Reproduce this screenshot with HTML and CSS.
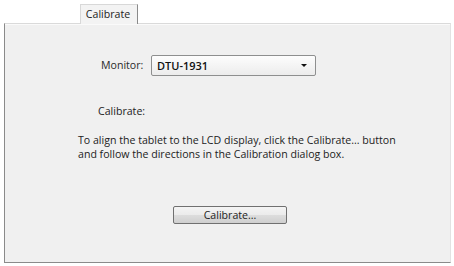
FILE: index.html
```html
<!DOCTYPE html>
<html>
<head>
<meta charset="utf-8">
<link rel="stylesheet" href="styles.css">
</head>
<body>
<div class="window">
  <div class="tabs">
    <div class="tab">Calibrate</div>
  </div>
  <div class="panel">
    <div class="monitor-row">
      <span class="label">Monitor:</span>
      <div class="select">
        <span class="select-text">DTU-1931</span>
        <svg class="arrow" width="6" height="3" viewBox="0 0 6 3"><path d="M0 0H6L3 3Z" fill="#111"/></svg>
      </div>
    </div>
    <div class="cal-label">Calibrate:</div>
    <p class="desc">To align the tablet to the LCD display, click the Calibrate... button<br>and follow the directions in the Calibration dialog box.</p>
    <div class="btn-row">
      <div class="button">Calibrate...</div>
    </div>
  </div>
</div>
</body>
</html>
```
FILE: styles.css
```css
html, body {
  margin: 0;
  padding: 0;
  background: #ffffff;
}
body {
  font-family: "Open Sans", "Noto Sans", sans-serif;
  font-size: 10.6px;
  color: #222222;
}
.window {
  width: 454px;
  height: 266px;
  padding: 4px 3px 0 4px;
  box-sizing: border-box;
  display: flex;
  flex-direction: column;
}
.tabs {
  display: flex;
  padding-left: 76px;
  height: 19px;
  position: relative;
  z-index: 1;
}
.tab {
  width: 58px;
  height: 20px;
  box-sizing: border-box;
  background: #f3f3f3;
  border: 1px solid #d8d8d8;
  border-right: 1px solid #8a8a8a;
  border-bottom: none;
  text-align: center;
  line-height: 19px;
  padding-right: 2px;
}
.panel {
  height: 240px;
  box-sizing: border-box;
  background: #f0f0f0;
  border-top: 1px solid #dadada;
  border-left: 1px solid #8a8a8a;
  border-bottom: 1px solid #8a8a8a;
  border-right: 1px solid #e2e2e2;
  box-shadow: inset 0 1px 0 #fafafa;
  padding: 30px 0 0 72px;
}
.monitor-row {
  display: flex;
  align-items: center;
  padding-left: 24px;
  height: 22px;
}
.label {
  width: 50px;
  color: #2a2a2a;
}
.select {
  width: 165px;
  height: 21px;
  box-sizing: border-box;
  border: 1px solid #8e8f8f;
  border-radius: 2px;
  background: linear-gradient(#fdfdfd, #ececec);
  display: flex;
  align-items: center;
  justify-content: space-between;
  padding: 0 8px 0 5px;
}
.select-text {
  font-weight: 600;
  font-size: 11px;
  color: #111;
}
.cal-label {
  margin-top: 28px;
  padding-left: 21px;
  line-height: 14px;
}
.desc {
  margin: 15px 0 0 1px;
  line-height: 14px;
}
.btn-row {
  margin-top: 45px;
  padding-left: 96px;
}
.button {
  width: 114px;
  height: 18px;
  box-sizing: border-box;
  border: 1px solid #707070;
  border-radius: 2px;
  background: linear-gradient(#f4f4f4 0%, #ebebeb 50%, #dddddd 51%, #cfcfcf 100%);
  text-align: center;
  line-height: 16px;
}
```
